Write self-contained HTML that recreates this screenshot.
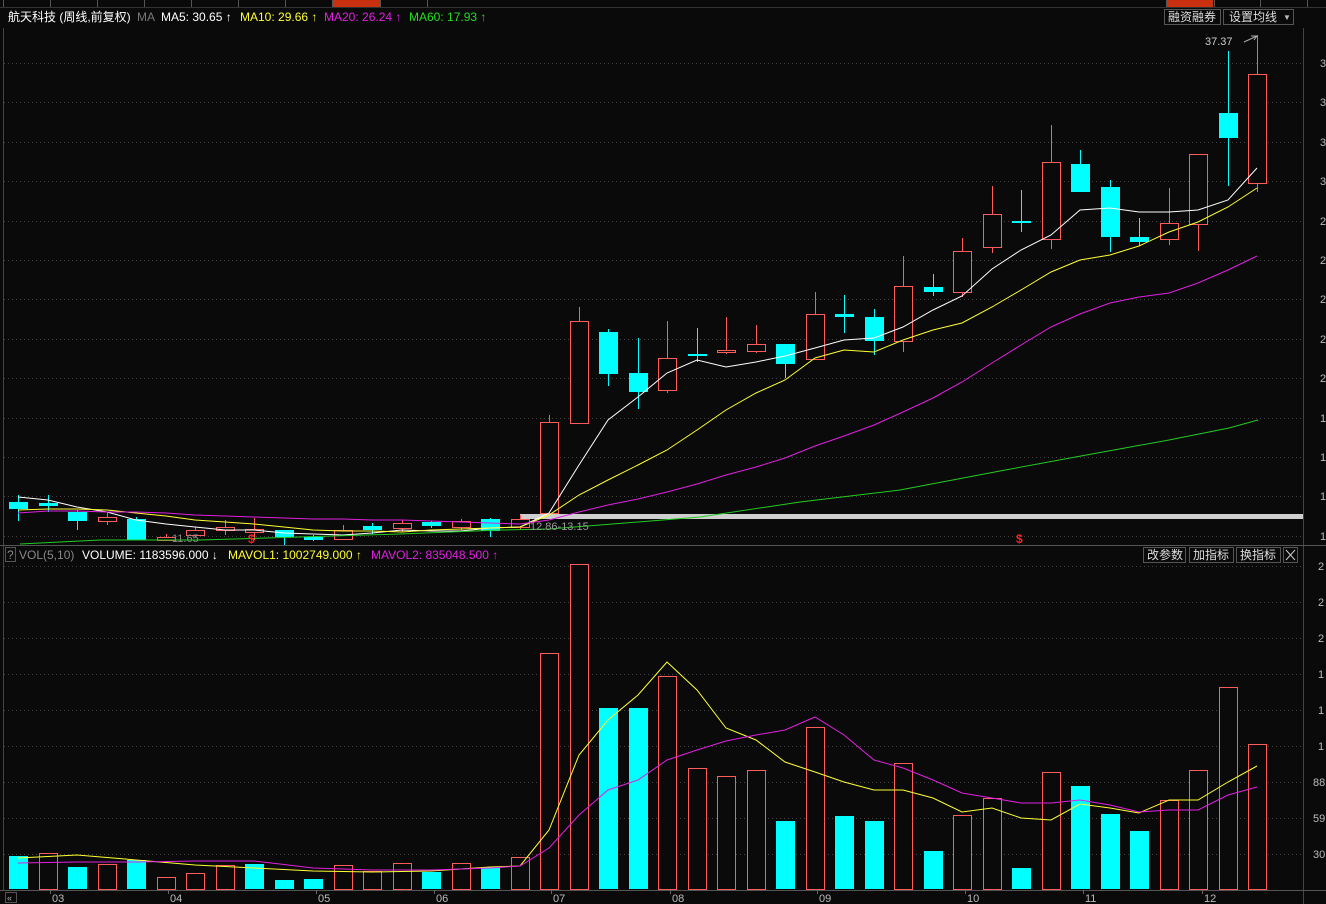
<!DOCTYPE html><html><head><meta charset="utf-8"><style>
body{margin:0;background:#0a0a0a;width:1326px;height:904px;overflow:hidden;font-family:"Liberation Sans","Noto Sans CJK SC",sans-serif}
svg{position:absolute;left:0;top:0}
</style></head><body>
<svg id="s" width="1326" height="904" xmlns="http://www.w3.org/2000/svg" font-family="Liberation Sans, Noto Sans CJK SC, sans-serif">
<rect width="1326" height="904" fill="#0a0a0a"/>
<g id="g"></g>
<text x="8" y="21" fill="#fff" font-size="12">航天科技 (周线,前复权)</text>
<text x="137" y="21" fill="#777" font-size="12">MA</text>
<text x="161" y="21" fill="#fff" font-size="12">MA5: 30.65 ↑</text>
<text x="240" y="21" fill="#ffff33" font-size="12">MA10: 29.66 ↑</text>
<text x="324" y="21" fill="#e020e0" font-size="12">MA20: 26.24 ↑</text>
<text x="409" y="21" fill="#22dd22" font-size="12">MA60: 17.93 ↑</text>
<rect x="1164.5" y="9.5" width="56" height="15" fill="none" stroke="#555"/>
<text x="1168" y="21" fill="#ddd" font-size="12">融资融券</text>
<rect x="1223.5" y="9.5" width="70" height="15" fill="none" stroke="#555"/>
<text x="1229" y="21" fill="#ddd" font-size="12">设置均线</text>
<text x="1283" y="20" fill="#bbb" font-size="8">▼</text>
<rect x="5.5" y="547.5" width="10" height="14" fill="none" stroke="#555"/>
<text x="7" y="559" fill="#888" font-size="12">?</text>
<text x="19" y="559" fill="#888" font-size="12">VOL(5,10)</text>
<text x="82" y="559" fill="#fff" font-size="12">VOLUME: 1183596.000 ↓</text>
<text x="228" y="559" fill="#ffff33" font-size="12">MAVOL1: 1002749.000 ↑</text>
<text x="371" y="559" fill="#e020e0" font-size="12">MAVOL2: 835048.500 ↑</text>
<rect x="1143.5" y="547.5" width="42" height="15" fill="none" stroke="#555"/><text x="1147" y="559" fill="#ddd" font-size="12">改参数</text>
<rect x="1189.5" y="547.5" width="44" height="15" fill="none" stroke="#555"/><text x="1193" y="559" fill="#ddd" font-size="12">加指标</text>
<rect x="1236.5" y="547.5" width="44" height="15" fill="none" stroke="#555"/><text x="1240" y="559" fill="#ddd" font-size="12">换指标</text>
<rect x="1283.5" y="547.5" width="14" height="15" fill="none" stroke="#555"/><path d="M1286 550 L1295 560 M1295 550 L1286 560" stroke="#ccc"/>
<text x="1205" y="45" fill="#ccc" font-size="11">37.37</text>
<path d="M1244 42 L1257 36 M1251 36 L1257 36 L1254 40" stroke="#aaa" fill="none"/>
<text x="172" y="542" fill="#888" font-size="11">11.65</text>
<text x="530" y="530" fill="#999" font-size="11">12.86-13.15</text>
<text x="248" y="543" fill="#ff2020" font-size="12" font-weight="bold">$</text>
<text x="1016" y="543" fill="#ff2020" font-size="12" font-weight="bold">$</text>
<rect x="5.5" y="892.5" width="11" height="10" fill="none" stroke="#555"/><text x="7" y="901" fill="#aaa" font-size="9">«</text>
</svg>
<script>
var g=document.getElementById('g'),h='';
function L(a,b,c,d,col,w,da){h+='<line x1="'+a+'" y1="'+b+'" x2="'+c+'" y2="'+d+'" stroke="'+col+'" stroke-width="'+(w||1)+'"'+(da?' stroke-dasharray="'+da+'"':'')+'/>';}
L(0,7.5,1326,7.5,'#333');
[3,50,97,144,191,238,285,332,380,427,1166,1214,1260,1307].forEach(function(x){L(x+.5,0,x+.5,7,'#555')});
h+='<rect x="333" y="0" width="47" height="7" fill="#c83010"/><rect x="1167" y="0" width="46" height="7" fill="#c83010"/>';
L(3.5,28,3.5,890,'#444');L(1303.5,28,1303.5,904,'#444');
L(0,545.5,1326,545.5,'#555');L(0,890.5,1326,890.5,'#555');
for(var y=63;y<545;y+=39.4){L(4,Math.round(y)+.5,1303,Math.round(y)+.5,'#444',1,'1,3');}
var pl=['3','3','3','3','2','2','2','2','2','1','1','1','1'];
for(var i=0;i<13;i++){h+='<text x="1320" y="'+(Math.round(63+i*39.4)+4)+'" fill="#bbb" font-size="11">'+pl[i]+'</text>';}
var vl=['2','2','2','1','1','1','88','59','30'];
for(var i=0;i<9;i++){var yy=566+i*36;L(4,yy+.5,1303,yy+.5,'#444',1,'1,3');h+='<text x="'+(vl[i].length>1?1313:1318)+'" y="'+(yy+4)+'" fill="#bbb" font-size="11">'+vl[i]+'</text>';}
h+='<rect x="520" y="514" width="783" height="5" fill="#cfcfcf"/>';
var C=[[502,495,521,502,509,'c'],[503,495,512,503,506,'c'],[512,510,530,512,521,'c'],[517,512,525,517,521,'r'],[519,517,540,519,540,'c'],[537,534,541,537,540,'r'],[530,527,537,530,535,'r'],[527,520,535,527,530,'r'],[529,518,540,529,532,'r'],[530,530,545,530,537,'c'],[537,535,541,537,540,'c'],[530,525,540,530,539,'r'],[526,523,534,526,530,'c'],[523,520,532,523,528,'r'],[522,521,528,522,526,'c'],[521,519,530,521,527,'r'],[519,518,537,519,531,'c'],[519,515,530,519,527,'r'],
[422,415,513,422,513,'r'],[321,307,423,321,423,'r'],[332,329,386,332,374,'c'],[373,338,409,373,392,'c'],[358,321,393,358,390,'r'],[354,328,362,354,356,'c'],[350,317,354,350,352,'r'],[344,325,353,344,351,'r'],[344,344,378,344,364,'c'],[314,292,359,314,359,'r'],[314,295,333,314,317,'c'],[317,309,355,317,341,'c'],
[286,256,352,286,341,'r'],[287,274,296,287,292,'c'],[251,238,297,251,292,'r'],[214,186,253,214,247,'r'],[221,190,232,221,223,'c'],[162,125,249,162,239,'r'],[164,150,192,164,192,'c'],[187,180,252,187,237,'c'],[237,218,246,237,242,'c'],[223,188,245,223,239,'r'],[154,154,251,154,224,'r'],[113,51,186,113,138,'c'],[74,35,192,74,183,'r']];
var V=[856,853,867,864,860,877,873,865,864,880,879,865,871,863,872,863,867,857,653,564,708,708,676,768,776,770,821,727,816,821,763,851,815,798,868,772,786,814,831,800,770,687,744];
var VC='crcrcrrrcccrrrcrcrrrccrrrrcrccrcrrcrcccrrrr';
var R='#ff5c5c',CY='#00ffff';
function X(i){return Math.round(18+i*29.5);}
function box(x,t,b,col){
 if(col=='r')h+='<rect x="'+(x-8.5)+'" y="'+(t+.5)+'" width="18" height="'+(b-t)+'" fill="#0a0a0a" stroke="'+R+'"/>';
 else h+='<rect x="'+(x-9)+'" y="'+t+'" width="19" height="'+(b-t)+'" fill="'+CY+'"/>';}
C.forEach(function(c,i){var x=X(i),col=c[5]=='r'?R:CY;L(x+.5,c[1],x+.5,c[2],col);
 var t=c[3],b=Math.max(c[4],t+2);box(x,t,b,c[5]);
 box(x,V[i],889,VC[i]);
});
function P(arr,col){var d='';arr.forEach(function(y,i){d+=(i?'L':'M')+X(i)+' '+y;});h+='<path d="'+d+'" fill="none" stroke="'+col+'"/>';}
P([497,500,507,512,520,524,527,530,530,533,534,535,533,530,531,531,528,527,513,465,420,397,373,360,367,362,356,348,340,338,327,310,296,269,250,235,210,208,212,212,210,200,168],'#fff');
P([510,509,509,510,513,516,520,522,524,527,530,531,531,532,530,529,528,527,515,495,480,465,450,430,410,393,380,358,350,352,340,330,323,307,290,272,260,255,246,232,222,207,188],'#ffff33');
P([513,511,511,512,512,513,515,516,517,518,519,519,520,520,521,522,523,524,520,512,505,499,492,484,475,467,458,446,436,425,412,398,382,363,345,327,314,303,297,293,283,270,256],'#e020e0');
h+='<path d="M20 544 L100 540 L200 540 L300 537 L400 534 L500 530 L549 529 L600 525 L700 517 L800 502 L900 490 L1000 471 L1081 456 L1169 440 L1229 428 L1258 420" fill="none" stroke="#22cc22"/>';
var m1={0:858,2:855,4:860,6:865,8:868,10:871,12:872,14:871,16:867,17:866},m2={0:863,2:862,4:862,6:861,8:861,10:868,12:870,14:870,16:868,17:866};
function fill(m){var a=[],k=Object.keys(m).map(Number);for(var i=0;i<18;i++){var lo=k.filter(function(q){return q<=i}).pop(),hi=k.filter(function(q){return q>=i})[0];a.push(lo==hi?m[lo]:m[lo]+(m[hi]-m[lo])*(i-lo)/(hi-lo));}return a;}
P(fill(m1).concat([830,755,720,695,662,690,728,740,762,772,782,790,790,798,812,808,818,820,804,808,813,800,800,782,766]),'#ffff33');
P(fill(m2).concat([848,815,790,780,760,750,741,735,730,717,735,760,768,780,793,798,803,803,800,805,812,810,810,795,787]),'#e020e0');
[['03',57],['04',175],['05',323],['06',441],['07',558],['08',677],['09',824],['10',972],['11',1090],['12',1209]].forEach(function(m){L(m[1]-6.5,890,m[1]-6.5,894,'#666');h+='<text x="'+(m[1]-5)+'" y="902" fill="#bbb" font-size="11">'+m[0]+'</text>';});
g.innerHTML=h;
</script>
</body></html>
